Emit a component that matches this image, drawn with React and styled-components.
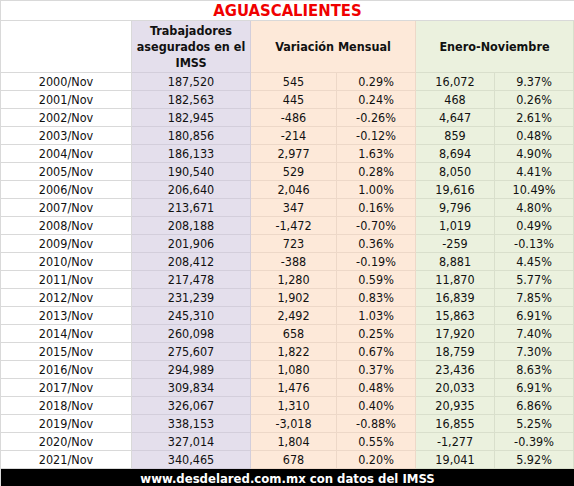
import styled, { createGlobalStyle } from 'styled-components';

const GlobalStyle = createGlobalStyle`
  html, body {
    margin: 0;
    padding: 0;
    background: #FFFFFF;
  }
  body {
    font-family: 'DejaVu Sans Condensed', 'DejaVu Sans', sans-serif;
    color: #111111;
  }
`

const rows = [
  ['2000/Nov', '187,520', '545', '0.29%', '16,072', '9.37%'],
  ['2001/Nov', '182,563', '445', '0.24%', '468', '0.26%'],
  ['2002/Nov', '182,945', '-486', '-0.26%', '4,647', '2.61%'],
  ['2003/Nov', '180,856', '-214', '-0.12%', '859', '0.48%'],
  ['2004/Nov', '186,133', '2,977', '1.63%', '8,694', '4.90%'],
  ['2005/Nov', '190,540', '529', '0.28%', '8,050', '4.41%'],
  ['2006/Nov', '206,640', '2,046', '1.00%', '19,616', '10.49%'],
  ['2007/Nov', '213,671', '347', '0.16%', '9,796', '4.80%'],
  ['2008/Nov', '208,188', '-1,472', '-0.70%', '1,019', '0.49%'],
  ['2009/Nov', '201,906', '723', '0.36%', '-259', '-0.13%'],
  ['2010/Nov', '208,412', '-388', '-0.19%', '8,881', '4.45%'],
  ['2011/Nov', '217,478', '1,280', '0.59%', '11,870', '5.77%'],
  ['2012/Nov', '231,239', '1,902', '0.83%', '16,839', '7.85%'],
  ['2013/Nov', '245,310', '2,492', '1.03%', '15,863', '6.91%'],
  ['2014/Nov', '260,098', '658', '0.25%', '17,920', '7.40%'],
  ['2015/Nov', '275,607', '1,822', '0.67%', '18,759', '7.30%'],
  ['2016/Nov', '294,989', '1,080', '0.37%', '23,436', '8.63%'],
  ['2017/Nov', '309,834', '1,476', '0.48%', '20,033', '6.91%'],
  ['2018/Nov', '326,067', '1,310', '0.40%', '20,935', '6.86%'],
  ['2019/Nov', '338,153', '-3,018', '-0.88%', '16,855', '5.25%'],
  ['2020/Nov', '327,014', '1,804', '0.55%', '-1,277', '-0.39%'],
  ['2021/Nov', '340,465', '678', '0.20%', '19,041', '5.92%'],
]

// background and line colour per column
const cols = [
  { bg: '#FFFFFF', line: '#D9D9D9' },
  { bg: '#E4DFEC', line: '#D3CEDB' },
  { bg: '#FDE9D9', line: '#EDD8C8' },
  { bg: '#FDE9D9', line: '#EDD8C8' },
  { bg: '#EBF1DE', line: '#D9DFCC' },
  { bg: '#EBF1DE', line: '#D9DFCC' },
]

export default function App() {
  return (
    <>
      <GlobalStyle />
      <Sheet>
        <Title>AGUASCALIENTES</Title>
        <Grid>
          <Head bg={cols[0].bg} line={cols[0].line}></Head>
          <Head bg={cols[1].bg} line={cols[1].line}>Trabajadores asegurados en el IMSS</Head>
          <Head bg={cols[2].bg} line={cols[3].line} span={2}>Variación Mensual</Head>
          <Head bg={cols[4].bg} line={cols[5].line} span={2}>Enero-Noviembre</Head>
          {rows.map(row =>
            row.map((value, i) => (
              <Cell key={row[0] + i} bg={cols[i].bg} line={cols[i].line}>{value}</Cell>
            ))
          )}
        </Grid>
        <Footer>www.desdelared.com.mx con datos del IMSS</Footer>
      </Sheet>
    </>
  )
}

const Sheet = styled.div`
width: 574px;
display: flex;
flex-direction: column;
box-sizing: border-box;
border-left: 1px solid #D9D9D9;
border-top: 1px solid #D9D9D9;
`

const Title = styled.div`
height: 20px;
box-sizing: border-box;
border-bottom: 1px solid #D9D9D9;
display: flex;
align-items: center;
justify-content: center;
color: #F00000;
font-weight: bold;
font-size: 16.5px;
line-height: 20px;
`

const Grid = styled.div`
display: grid;
grid-template-columns: 131px 119px 86px 79px 79px 79px;
grid-auto-rows: 18px;
grid-template-rows: 52px;
`

const Head = styled.div`
grid-column: span ${props => props.span || 1};
background: ${props => props.bg};
box-sizing: border-box;
border-bottom: 1px solid ${props => props.line};
border-right: 1px solid ${props => props.line};
display: flex;
align-items: center;
justify-content: center;
text-align: center;
font-weight: bold;
font-size: 12.5px;
line-height: 16px;
padding: 0 4px;
color: #111111;
`

const Cell = styled.div`
background: ${props => props.bg};
box-sizing: border-box;
border-bottom: 1px solid ${props => props.line};
border-right: 1px solid ${props => props.line};
display: flex;
align-items: center;
justify-content: center;
font-size: 12.5px;
color: #111111;
`

const Footer = styled.div`
height: 18px;
background: #000000;
color: #FFFFFF;
display: flex;
align-items: center;
justify-content: center;
font-weight: bold;
font-size: 13px;
`
